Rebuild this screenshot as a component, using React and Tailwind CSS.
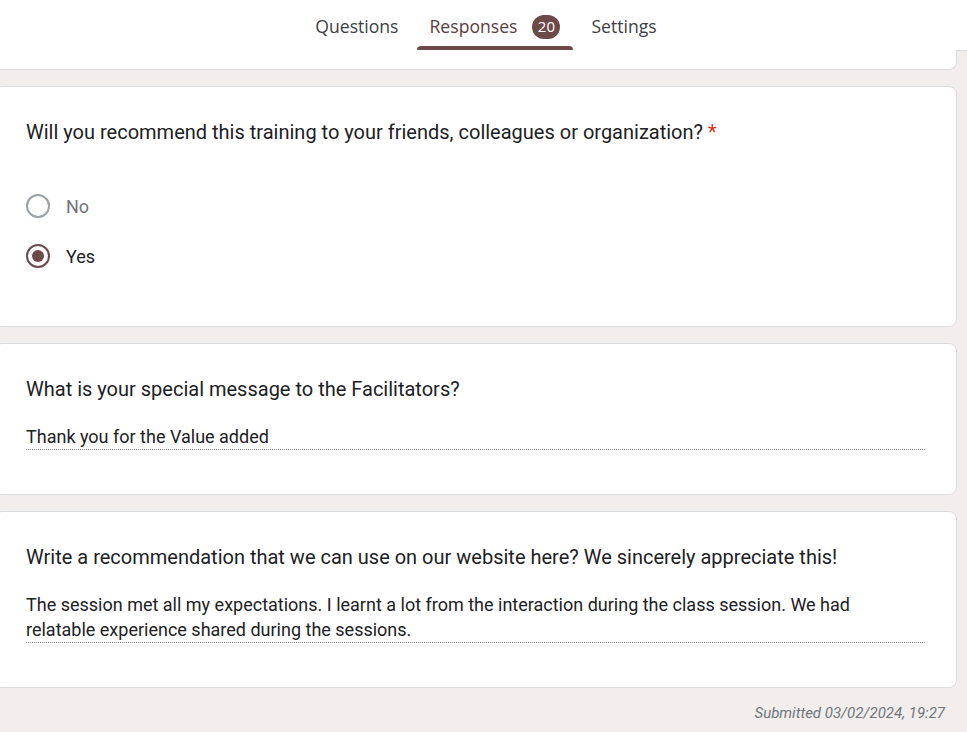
import React from 'react';

const Card = ({ children, className = '' }) => (
  <div className={`bg-white border border-[#dadce0] rounded-[8px] -ml-[6px] mr-[10px] ${className}`}>
    {children}
  </div>
);

const Radio = ({ label, checked }) => (
  <div className="flex items-center h-[50px]">
    <span
      className={`w-[24px] h-[24px] rounded-full border-2 flex items-center justify-center ${
        checked ? 'border-[#6d4a4a]' : 'border-[#9aa0a6]'
      }`}
    >
      {checked && <span className="w-[12px] h-[12px] rounded-full bg-[#6d4a4a]" />}
    </span>
    <span className={`ml-[16px] text-[18px] ${checked ? 'text-[#202124]' : 'text-[#70757a]'}`}>{label}</span>
  </div>
);

const Answer = ({ children, className = '' }) => (
  <div className={`border-b border-dotted border-[#80868b] text-[18px] leading-[25px] text-[#202124] ${className}`}>
    {children}
  </div>
);

export default function App() {
  return (
    <div className="min-h-screen bg-[#f1eeed] overflow-hidden" style={{ fontFamily: 'Roboto, "Liberation Sans", sans-serif' }}>
      <div className="h-[51px] bg-white border-b border-[#dadce0] flex justify-center items-end">
        <div className="flex items-end h-full text-[17.6px] font-medium text-[#3c4043] ml-[9px]" style={{ fontFamily: '"Open Sans", Roboto, sans-serif' }}>
          <div className="h-full flex items-center pt-[3px] px-[14px]">Questions</div>
          <div className="relative h-full flex items-center pt-[3px] px-[13px] ml-[4px]">
            <span className="text-[#5b3e3e]">Responses</span>
            <span className="ml-[15px] w-[28px] h-[24px] rounded-full bg-[#6d4a4a] text-white text-[15px] flex items-center justify-center">20</span>
            <span className="absolute left-0 right-0 bottom-0 h-[4px] bg-[#6d4a4a] rounded-t-[4px]" />
          </div>
          <div className="h-full flex items-center pt-[3px] px-[18px]">Settings</div>
        </div>
      </div>

      <div className="flex flex-col gap-[16px]">
        <Card className="h-[20px] -mt-[1px] rounded-t-none border-t-0" />

        <Card className="h-[241px] px-[31px] pt-[31px]">
          <div className="text-[20px] text-[#202124] leading-[28px]">
            Will you recommend this training to your friends, colleagues or organization? <span className="text-[#d93025]">*</span>
          </div>
          <div className="mt-[35px]">
            <Radio label="No" />
            <Radio label="Yes" checked />
          </div>
        </Card>

        <Card className="h-[152px] px-[31px] pt-[31px]">
          <div className="text-[20px] text-[#202124] leading-[28px]">What is your special message to the Facilitators?</div>
          <Answer className="mt-[21px]">Thank you for the Value added</Answer>
        </Card>

        <Card className="h-[177px] px-[31px] pt-[31px]">
          <div className="text-[20px] text-[#202124] leading-[28px]">
            Write a recommendation that we can use on our website here? We sincerely appreciate this!
          </div>
          <Answer className="mt-[21px]">
            The session met all my expectations. I learnt a lot from the interaction during the class session. We had
            <br />
            relatable experience shared during the sessions.
          </Answer>
        </Card>
      </div>

      <div className="text-right pr-[22px] mt-[14px] text-[15px] italic text-[#70757a]">Submitted 03/02/2024, 19:27</div>
    </div>
  );
}
